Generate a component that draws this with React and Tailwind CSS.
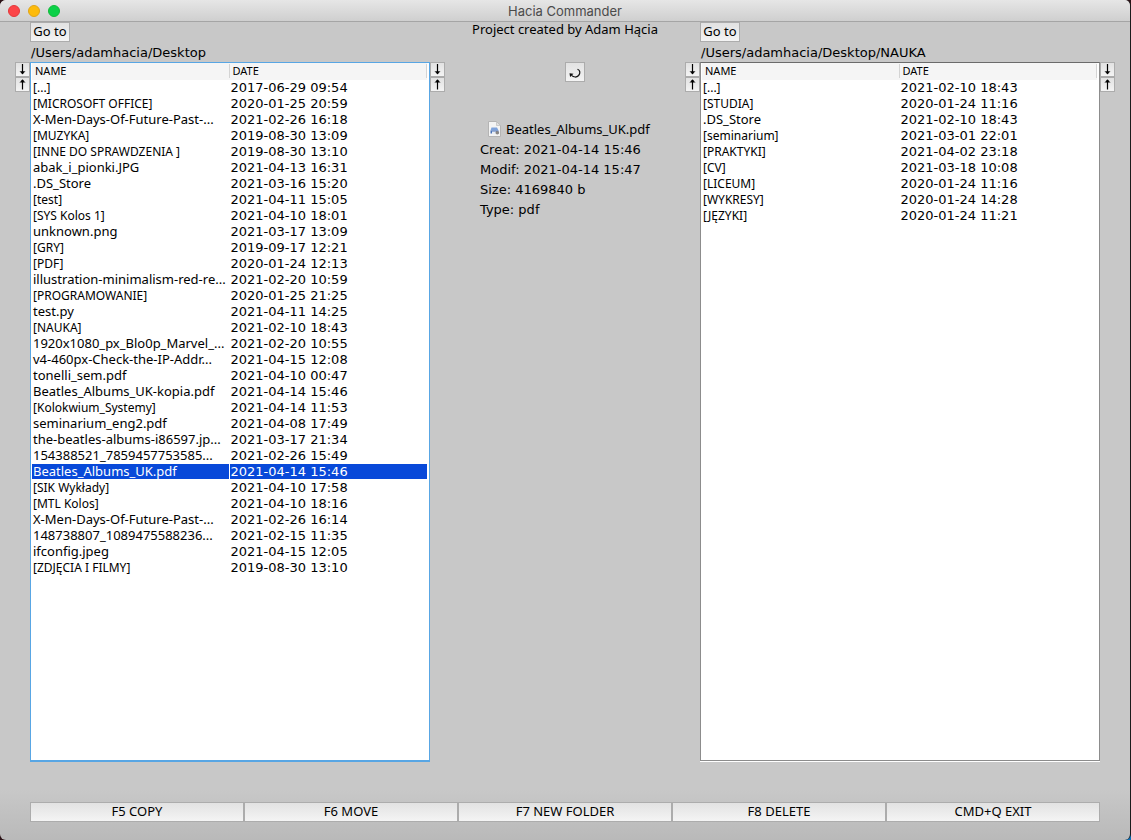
import { useState } from "react";

const leftFiles = [
  ["[...]", "2017-06-29 09:54"],
  ["[MICROSOFT OFFICE]", "2020-01-25 20:59"],
  ["X-Men-Days-Of-Future-Past-...", "2021-02-26 16:18"],
  ["[MUZYKA]", "2019-08-30 13:09"],
  ["[INNE DO SPRAWDZENIA ]", "2019-08-30 13:10"],
  ["abak_i_pionki.JPG", "2021-04-13 16:31"],
  [".DS_Store", "2021-03-16 15:20"],
  ["[test]", "2021-04-11 15:05"],
  ["[SYS Kolos 1]", "2021-04-10 18:01"],
  ["unknown.png", "2021-03-17 13:09"],
  ["[GRY]", "2019-09-17 12:21"],
  ["[PDF]", "2020-01-24 12:13"],
  ["illustration-minimalism-red-re...", "2021-02-20 10:59"],
  ["[PROGRAMOWANIE]", "2020-01-25 21:25"],
  ["test.py", "2021-04-11 14:25"],
  ["[NAUKA]", "2021-02-10 18:43"],
  ["1920x1080_px_Blo0p_Marvel_...", "2021-02-20 10:55"],
  ["v4-460px-Check-the-IP-Addr...", "2021-04-15 12:08"],
  ["tonelli_sem.pdf", "2021-04-10 00:47"],
  ["Beatles_Albums_UK-kopia.pdf", "2021-04-14 15:46"],
  ["[Kolokwium_Systemy]", "2021-04-14 11:53"],
  ["seminarium_eng2.pdf", "2021-04-08 17:49"],
  ["the-beatles-albums-i86597.jp...", "2021-03-17 21:34"],
  ["154388521_7859457753585...", "2021-02-26 15:49"],
  ["Beatles_Albums_UK.pdf", "2021-04-14 15:46"],
  ["[SIK Wykłady]", "2021-04-10 17:58"],
  ["[MTL Kolos]", "2021-04-10 18:16"],
  ["X-Men-Days-Of-Future-Past-...", "2021-02-26 16:14"],
  ["148738807_1089475588236...", "2021-02-15 11:35"],
  ["ifconfig.jpeg", "2021-04-15 12:05"],
  ["[ZDJĘCIA I FILMY]", "2019-08-30 13:10"],
];

const rightFiles = [
  ["[...]", "2021-02-10 18:43"],
  ["[STUDIA]", "2020-01-24 11:16"],
  [".DS_Store", "2021-02-10 18:43"],
  ["[seminarium]", "2021-03-01 22:01"],
  ["[PRAKTYKI]", "2021-04-02 23:18"],
  ["[CV]", "2021-03-18 10:08"],
  ["[LICEUM]", "2020-01-24 11:16"],
  ["[WYKRESY]", "2020-01-24 14:28"],
  ["[JĘZYKI]", "2020-01-24 11:21"],
];

const face = "border border-[#acacac] bg-linear-to-b from-[#e2e2e2] to-[#f4f4f4]";

function SortButtons({ column }) {
  return (
    <div className="mt-10 flex w-[15px] shrink-0 flex-col">
      <button aria-label={`Sort ${column} descending`} className={`flex h-[15px] items-center justify-center ${face}`}>
        <svg width="7" height="11" viewBox="0 0 7 11" fill="none" stroke="#000">
          <path d="M3.5 0v9" strokeWidth="1.2" />
          <path d="M1.3 7.2h4.4L3.5 10.6z" fill="#000" stroke="none" />
          <path d="M1.1 7.3l2.4 2.6 2.4-2.6" strokeWidth="0.8" />
        </svg>
      </button>
      <button aria-label={`Sort ${column} ascending`} className={`flex h-[15px] items-center justify-center ${face}`}>
        <svg width="7" height="11" viewBox="0 0 7 11" fill="none" stroke="#000">
          <path d="M3.5 1v9.5" strokeWidth="1.2" />
          <path d="M1.3 3.6h4.4L3.5 0.2z" fill="#000" stroke="none" />
          <path d="M1.1 3.5L3.5 0.9l2.4 2.6" strokeWidth="0.8" />
        </svg>
      </button>
    </div>
  );
}

function Panel({ path, files, active, selected, onSelect }) {
  return (
    <section className="flex min-w-0 flex-1 flex-col">
      <div className="h-5">
        <button className={`flex h-5 w-10 items-center justify-center text-[13px] ${face}`}>Go to</button>
      </div>
      <div className="h-5 truncate pl-px font-['DejaVu_Sans',sans-serif] text-[13px] leading-[22px]">{path}</div>
      <div
        className={
          active
            ? "flex-1 border border-b-2 border-[#58a6e4] bg-white pr-0.5 pl-px"
            : "mb-px flex-1 border border-[#8c8c8c] border-t-[#6b6b6b] bg-white pr-0.5 pl-px shadow-[0_1px_0_#fff]"
        }
      >
        <table className="w-full table-fixed border-separate border-spacing-0">
          <thead>
            <tr className="h-[17px] bg-[#f5f5f5] text-left text-[11px] leading-[14px]">
              <th className="p-0 pt-px align-top font-normal">
                <span className="block border-r border-[#d4d4d4] pl-[3px]">NAME</span>
              </th>
              <th className="p-0 pt-px align-top font-normal">
                <span className="block border-r border-[#d4d4d4] pl-[3px]">DATE</span>
              </th>
            </tr>
          </thead>
          <tbody>
            {files.map(([name, date], i) => (
              <tr
                key={i}
                onClick={() => onSelect(i)}
                className={selected === i ? "h-4 bg-[#0849d9] text-white" : "h-4"}
              >
                <td
                  className={
                    name.startsWith("[")
                      ? "border-r border-b border-white p-0 pl-px text-[12px] leading-[15px] whitespace-nowrap"
                      : "border-r border-b border-white p-0 pl-px text-[13px] leading-[15px] whitespace-nowrap"
                  }
                >
                  {name}
                </td>
                <td className="border-b border-white p-0 pl-px font-['DejaVu_Sans',sans-serif] text-[13px] leading-[15px] whitespace-nowrap">
                  {date}
                </td>
              </tr>
            ))}
          </tbody>
        </table>
      </div>
    </section>
  );
}

export default function App() {
  const [left, setLeft] = useState(24);
  const [right, setRight] = useState(-1);

  return (
    <div className="min-h-screen bg-linear-to-br from-[#2b1216] from-70% to-[#0a6fb8] to-95% font-['Noto_Sans',sans-serif] text-black">
      <div className="flex min-h-screen flex-col overflow-hidden rounded-md border-r border-[#1c1c1c] bg-linear-to-b from-[#c8c8c8] from-94% to-[#b9b9b9]">
        <header className="relative flex h-[22px] items-center justify-center border-b border-[#a5a5a5] bg-linear-to-b from-[#e6e6e6] to-[#cfcfcf]">
          <div className="absolute left-2 flex gap-2">
            <button aria-label="Close" className="size-3 rounded-full border border-[#e2393b] bg-[#fc4548]" />
            <button aria-label="Minimise" className="size-3 rounded-full border border-[#e0a417] bg-[#fdbb0b]" />
            <button aria-label="Zoom" className="size-3 rounded-full border border-[#12b93a] bg-[#0bd148]" />
          </div>
          <h1 className="pt-px font-['Inter',sans-serif] text-[13px] leading-[18px] text-[#4b4b4b]">Hacia Commander</h1>
        </header>

        <main className="flex flex-1 px-[15px]">
          <SortButtons column="left name" />
          <Panel path="/Users/adamhacia/Desktop" files={leftFiles} active selected={left} onSelect={setLeft} />
          <SortButtons column="left date" />

          <div className="flex w-60 shrink-0 flex-col">
            <p className="h-10 text-center text-[13px] leading-[14px]">Project created by Adam Hącia</p>
            <button aria-label="Refresh" className={`ml-[120px] flex size-5 items-center justify-center ${face}`}>
              <svg width="14" height="14" viewBox="0 0 14 14" fill="none" stroke="#111" strokeWidth="1.2">
                <path d="M9.500 4.200C12.300 5.200 12.500 8.200 10.600 10.500C8.600 12.600 5.600 12.500 3.500 10.400" />
                <path d="M1.500 8.300l4 .5-3.400 3.200z" fill="#111" stroke="none" />
              </svg>
            </button>
            <div className="mt-[37px] pl-[35px] text-[13px] leading-[20px]">
              <div className="flex items-center gap-[5px] pl-2">
                <svg width="13" height="16" viewBox="0 0 13 16">
                  <path d="M.5.5h8l4 4v11H.5z" fill="#f4f4f4" stroke="#b4b4b4" />
                  <path d="M8.500.5v4h4z" fill="#e2e2e2" stroke="#b5b5b5" strokeWidth=".6" />
                  <path d="M3.500 6.500h5.500l1.500 3h-8z" fill="#7fa3dc" />
                  <path d="M2.500 9.500h8v3h-8z" fill="#4a73b8" />
                  <path d="M4 10.500h4v2.500H4z" fill="#e8edf5" />
                  <circle cx="9.300" cy="11.700" r="1.800" fill="#8a8683" />
                </svg>
                <span>Beatles_Albums_UK.pdf</span>
              </div>
              <div className="pt-px font-['DejaVu_Sans',sans-serif]">
                <p>Creat: 2021-04-14 15:46</p>
                <p>Modif: 2021-04-14 15:47</p>
                <p>Size: 4169840 b</p>
                <p>Type: pdf</p>
              </div>
            </div>
          </div>

          <SortButtons column="right name" />
          <Panel path="/Users/adamhacia/Desktop/NAUKA" files={rightFiles} selected={right} onSelect={setRight} />
          <SortButtons column="right date" />
        </main>

        <footer className="mt-10 mb-[18px] grid grid-cols-5 px-[30px] text-[13px] leading-4">
          <button className={`pb-0.5 ${face}`}>F5 COPY</button>
          <button className={`pb-0.5 ${face}`}>F6 MOVE</button>
          <button className={`pb-0.5 ${face}`}>F7 NEW FOLDER</button>
          <button className={`pb-0.5 ${face}`}>F8 DELETE</button>
          <button className={`pb-0.5 ${face}`}>CMD+Q EXIT</button>
        </footer>
      </div>
    </div>
  );
}
